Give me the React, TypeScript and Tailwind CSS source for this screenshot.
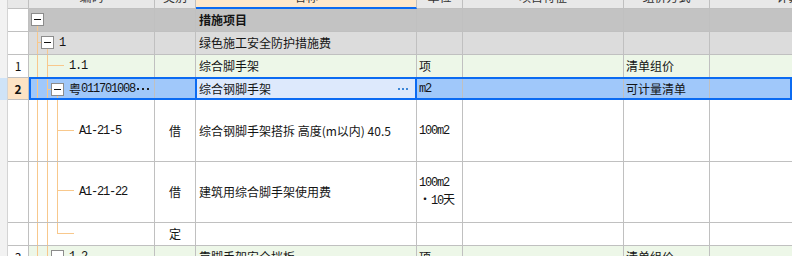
import React from "react";

const line = "border-[#c0c0c0]";
const cjk = "font-['Noto_Sans_CJK_SC','Noto_Sans',sans-serif]";
const mono = "font-['Liberation_Mono','Noto_Sans_CJK_SC',monospace] text-[12px] tracking-[-1.2px]";
const orange = "#f8c88c";

// tree connector helpers
const V = (x: number, y1: number, y2: number) => (
  <line key={`v${x}-${y1}`} x1={x + 0.5} x2={x + 0.5} y1={y1} y2={y2} stroke={orange} />
);
const H = (y: number, x1: number, x2: number) => (
  <line key={`h${y}-${x1}`} x1={x1} x2={x2} y1={y + 0.5} y2={y + 0.5} stroke={orange} />
);
const Box = (x: number, y: number) => (
  <g key={`b${x}-${y}`}>
    <rect x={x + 0.5} y={y + 0.5} width={12} height={12} fill="#fff" stroke="#8c8c8c" />
    <line x1={x + 3} x2={x + 10} y1={y + 6.5} y2={y + 6.5} stroke="#111" />
  </g>
);

const Tree = ({ h, children }: { h: number; children: React.ReactNode }) => (
  <svg className="absolute left-0 top-0" width={60} height={h}>
    {children}
  </svg>
);

type RowProps = {
  h: string;
  bg: string;
  num?: React.ReactNode;
  numBg?: string;
  stripBg?: string;
  tree?: React.ReactNode;
  code?: React.ReactNode;
  codePad?: string;
  kind?: string;
  name?: React.ReactNode;
  unit?: React.ReactNode;
  way?: string;
  selected?: boolean;
};

function Row(p: RowProps) {
  return (
    <div className={`relative flex ${p.h} ${p.bg}`}>
      <div className={`w-[8px] shrink-0 border-r border-[#d4d4d4] ${p.stripBg ?? "bg-[#f2f2f2]"}`} />
      <div
        className={`w-[21px] shrink-0 border-r border-b ${line} flex items-center justify-center ${p.numBg ?? "bg-white"}`}
      >
        {p.num}
      </div>
      <div className={`relative w-[126px] shrink-0 border-r border-b ${line} flex items-center ${p.codePad ?? ""}`}>
        {p.tree}
        <span className="relative flex items-center whitespace-nowrap">{p.code}</span>
      </div>
      <div className={`w-[41px] shrink-0 border-r border-b ${line} flex items-center justify-center`}>{p.kind}</div>
      {p.selected ? (
        <div className={`relative w-[221px] shrink-0 border-r border-b ${line} bg-[#dde9fc] flex items-center justify-between pl-[3px] pr-[8px]`}>
          <span>{p.name}</span>
          <span className="flex gap-[2px]">
            <span className="w-[2px] h-[2px] bg-[#3d86d6]" />
            <span className="w-[2px] h-[2px] bg-[#3d86d6]" />
            <span className="w-[2px] h-[2px] bg-[#3d86d6]" />
          </span>
          <span className="pointer-events-none absolute -left-[1px] -top-[1px] -right-[1px] -bottom-[1px] border-2 border-[#0b6bf2]" />
        </div>
      ) : (
        <div className={`w-[221px] shrink-0 border-r border-b ${line} flex items-center pl-[3px] whitespace-nowrap`}>
          {p.name}
        </div>
      )}
      <div className={`w-[46px] shrink-0 border-r border-b ${line} flex items-center pl-[2px]`}>{p.unit}</div>
      <div className={`w-[161px] shrink-0 border-r border-b ${line}`} />
      <div className={`w-[86px] shrink-0 border-r border-b ${line} flex items-center pl-[2px]`}>{p.way}</div>
      <div className={`w-[182px] shrink-0 border-r border-b ${line}`} />
      {p.selected && (
        <span className="pointer-events-none absolute left-[29px] right-0 -top-[1px] bottom-0 border-2 border-[#0b6bf2]" />
      )}
    </div>
  );
}

const HeadCell = ({ w, children, active }: { w: string; children?: React.ReactNode; active?: boolean }) => (
  <div
    className={`${w} shrink-0 border-r ${line} flex items-center justify-center ${
      active ? "bg-[#fde8cc] border-b-2 border-b-[#0b6bf2]" : "bg-[#e8e8e8] border-b"
    }`}
  >
    {children}
  </div>
);

export default function App() {
  return (
    <div className={`w-[792px] h-[256px] overflow-hidden bg-white ${cjk} text-[12px] leading-[16px] text-[#141414]`}>
      <div className="-mt-[14px]">
        {/* column header, scrolled mostly out of view */}
        <div className="flex h-[23px] text-[#333]">
          <div className="w-[8px] shrink-0 border-r border-[#d4d4d4] bg-[#f2f2f2]" />
          <HeadCell w="w-[21px]" />
          <HeadCell w="w-[126px]">编码</HeadCell>
          <HeadCell w="w-[41px]">类别</HeadCell>
          <HeadCell w="w-[221px]" active>
            名称
          </HeadCell>
          <HeadCell w="w-[46px]">单位</HeadCell>
          <HeadCell w="w-[161px]">项目特征</HeadCell>
          <HeadCell w="w-[86px]">组价方式</HeadCell>
          <HeadCell w="w-[182px]">计算基数</HeadCell>
        </div>

        <Row
          h="h-[23px]"
          bg="bg-[#c3c3c3]"
          tree={<Tree h={22}>{[Box(2, 4), V(8, 17, 22)]}</Tree>}
          name={<span className="font-bold">措施项目</span>}
        />

        <Row
          h="h-[23px]"
          bg="bg-[#dcdcdc]"
          tree={<Tree h={22}>{[V(8, 0, 22), H(10, 8, 12), Box(12, 4), V(18, 17, 22)]}</Tree>}
          codePad="pl-[30px]"
          code={<span className={mono}>1</span>}
          name="绿色施工安全防护措施费"
        />

        <Row
          h="h-[23px]"
          bg="bg-[#edf7e8]"
          num="1"
          tree={<Tree h={22}>{[V(8, 0, 22), V(18, 0, 22), H(10, 18, 35)]}</Tree>}
          codePad="pl-[40px]"
          code={<span className={mono}>1.1</span>}
          name="综合脚手架"
          unit="项"
          way="清单组价"
        />

        <Row
          h="h-[22px]"
          bg="bg-[#a0c8fa]"
          num={<span className="font-bold">2</span>}
          numBg="bg-[#fde3c4]"
          stripBg="bg-[#cfe3f7]"
          tree={<Tree h={21}>{[V(8, 0, 21), V(18, 0, 21), H(11, 18, 22), Box(22, 5), V(28, 18, 21)]}</Tree>}
          codePad="pl-[40px]"
          code={
            <>
              粤<span className={mono}>011701008</span>
              <span className="ml-[2px] flex items-center gap-[3px]">
                <span className="w-[2px] h-[2px] bg-[#222]" />
                <span className="w-[2px] h-[2px] bg-[#222]" />
                <span className="w-[2px] h-[2px] bg-[#222]" />
              </span>
            </>
          }
          name="综合钢脚手架"
          unit={<span className={mono}>m2</span>}
          way="可计量清单"
          selected
        />

        <Row
          h="h-[62px]"
          bg="bg-white"
          tree={<Tree h={61}>{[V(8, 0, 61), V(18, 0, 61), V(28, 0, 61), H(30, 28, 45)]}</Tree>}
          codePad="pl-[50px]"
          code={<span className={mono}>A1-21-5</span>}
          kind="借"
          name="综合钢脚手架搭拆 高度(m以内) 40.5"
          unit={<span className={mono}>100m2</span>}
        />

        <Row
          h="h-[61px]"
          bg="bg-white"
          tree={<Tree h={60}>{[V(8, 0, 60), V(18, 0, 60), V(28, 0, 60), H(28, 28, 45)]}</Tree>}
          codePad="pl-[50px]"
          code={<span className={mono}>A1-21-22</span>}
          kind="借"
          name="建筑用综合脚手架使用费"
          unit={
            <div className="flex flex-col">
              <span className={mono}>100m2</span>
              <span>
                ・<span className={mono}>10</span>天
              </span>
            </div>
          }
        />

        <Row
          h="h-[23px]"
          bg="bg-white"
          tree={<Tree h={22}>{[V(8, 0, 22), V(18, 0, 22), V(28, 0, 11), H(10, 28, 45)]}</Tree>}
          kind="定"
        />

        <Row
          h="h-[23px]"
          bg="bg-[#edf7e8]"
          num="3"
          tree={<Tree h={22}>{[V(8, 0, 22), V(18, 0, 22), H(10, 18, 22), Box(22, 4)]}</Tree>}
          codePad="pl-[40px]"
          code={<span className={mono}>1.2</span>}
          name="靠脚手架安全挡板"
          unit="项"
          way="清单组价"
        />
      </div>
    </div>
  );
}
